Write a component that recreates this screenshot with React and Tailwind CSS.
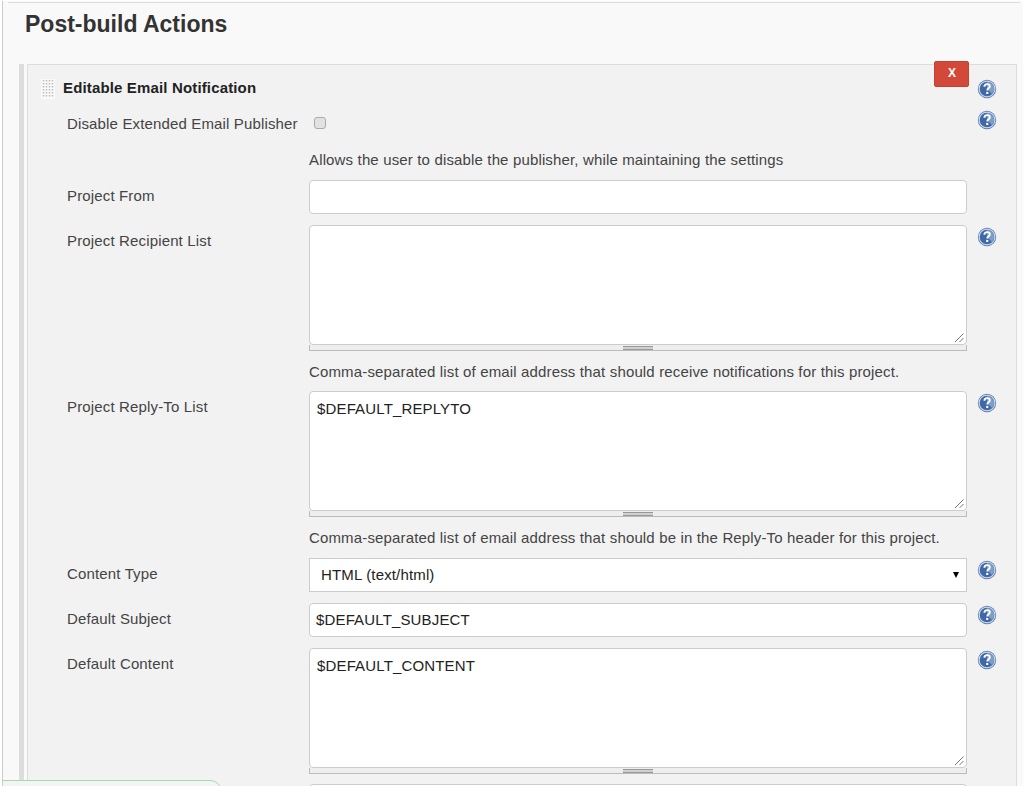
import React from "react";

function Help({ className = "" }) {
  return (
    <svg className={`shrink-0 ${className}`} width="20" height="20" viewBox="0 0 20 20">
      <circle cx="10" cy="10" r="9.2" fill="#6485b5" />
      <circle cx="10" cy="10" r="7.8" fill="none" stroke="#cbd8e8" strokeWidth="1.1" />
      <circle cx="10" cy="10" r="7.1" fill="#3f68a6" />
      <path d="M10 3a7 7 0 0 1 5 12L10 10z" fill="#7f9dc6" />
      <path d="M7.4 7.7c0-1.7 1.1-2.6 2.7-2.6s2.7.9 2.7 2.3c0 1.9-2.5 2-2.5 4" fill="none" stroke="#fff" strokeWidth="1.9" />
      <rect x="9.2" y="12.9" width="2.1" height="2.1" fill="#fff" />
    </svg>
  );
}

function Row({ label, help = true, height, children }) {
  return (
    <div className={`flex shrink-0 items-start ${height}`}>
      <div className="w-[243px] shrink-0 pt-[7px] pl-px leading-[18px]">{label}</div>
      <div className="w-[658px] shrink-0">{children}</div>
      {help && <Help className="ml-[10px] mt-[2px]" />}
    </div>
  );
}

function Area({ value, note }) {
  return (
    <>
      <div className="flex h-[120px] justify-between rounded-[4px] border border-[#ccc] bg-white pl-[7px] pt-[8px] leading-[18px] text-[#222]">
        <span>{value}</span>
        <svg className="mr-px mb-px self-end" width="11" height="11" viewBox="0 0 11 11" stroke="#777" strokeWidth="1">
          <path d="M1 10L9.5 1.5M5.5 10L9.5 6" />
        </svg>
      </div>
      <div className="flex h-[6px] justify-center border-x border-b border-[#bbb] bg-[#eee]">
        <div className="mt-px flex h-[4px] w-[30px] flex-col justify-between bg-[#d0d0cc]">
          <div className="h-px bg-[#999]" />
          <div className="h-px bg-[#999]" />
        </div>
      </div>
      {note && <p className="mt-[12px] whitespace-nowrap leading-[18px]">{note}</p>}
    </>
  );
}

export default function App() {
  return (
    <div className="h-[787px] w-[1023px] overflow-hidden bg-white font-['Liberation_Sans',Arial,sans-serif] text-[15px] tracking-[0.15px] text-[#444]">
      <div className="relative mt-px ml-[2px] h-[785px] overflow-hidden border-l border-[#ccc] bg-[#f9f9f9]">
        <div className="ml-[5px] mr-[3px] mt-px h-px bg-[#ddd]" />
        <h1 className="ml-[22px] mt-[7px] h-[54px] text-[23px] leading-[28px] font-bold tracking-normal text-[#333]">
          Post-build Actions
        </h1>
        <div className="ml-4 flex h-[760px]">
          <div className="mr-[3px] w-[5px] bg-[#ddd]" />
          <section className="flex w-[990px] flex-col border border-[#ddd] bg-[#f2f2f2]">
            <header className="flex h-[40px] shrink-0 items-start">
              <svg className="mt-[14px] ml-[13px]" width="14" height="20" viewBox="0 0 14 20">
                <rect width="14" height="20" fill="#fafafa" />
                <path d="M2.5 1v18M5.5 1v18M8.5 1v18M11.5 1v18" stroke="#bbb" strokeWidth="1.5" strokeDasharray="1.5 1.5" />
              </svg>
              <b className="ml-[8px] mt-[14px] w-[871px] leading-[18px] text-[#222]">Editable Email Notification</b>
              <div className="-mt-[4px] flex h-[26px] w-[35px] items-center justify-center rounded-[2px] border border-[#c9402f] bg-[#d24939] pb-[2px] pl-px text-[12px] font-bold text-white">X</div>
              <Help className="ml-[8px] mt-[14px]" />
            </header>
            <div className="flex flex-col pl-[38px]">
              <div className="flex h-[36px] shrink-0 items-start">
                <div className="w-[243px] shrink-0 pt-[10px] pl-px leading-[18px]">Disable Extended Email Publisher</div>
                <div className="w-[658px] shrink-0 pt-[12px] pl-[5px]">
                  <div className="h-[12px] w-[12px] rounded-[3px] border border-[#aaa] bg-[#e2e2e2]" />
                </div>
                <Help className="ml-[10px] mt-[5px]" />
              </div>
              <Row height="h-[39px]" help={false}>
                <p className="mt-[10px] whitespace-nowrap leading-[18px]">Allows the user to disable the publisher, while maintaining the settings</p>
              </Row>
              <Row label="Project From" height="h-[45px]" help={false}>
                <div className="h-[34px] rounded-[4px] border border-[#ccc] bg-white" />
              </Row>
              <Row label="Project Recipient List" height="h-[166px]">
                <Area note="Comma-separated list of email address that should receive notifications for this project." />
              </Row>
              <Row label="Project Reply-To List" height="h-[167px]">
                <Area value="$DEFAULT_REPLYTO" note="Comma-separated list of email address that should be in the Reply-To header for this project." />
              </Row>
              <Row label="Content Type" height="h-[45px]">
                <div className="flex h-[34px] items-center justify-between border border-[#ccc] bg-white pr-[7px] pl-[11px] text-[#222]">
                  <span>HTML (text/html)</span>
                  <svg width="6" height="6" viewBox="0 0 6 6"><path d="M0 0h6L3 6z" fill="#000" /></svg>
                </div>
              </Row>
              <Row label="Default Subject" height="h-[45px]">
                <div className="flex h-[34px] items-center rounded-[4px] border border-[#ccc] bg-white pl-[6px] text-[#222]">$DEFAULT_SUBJECT</div>
              </Row>
              <Row label="Default Content" height="h-[136px]">
                <Area value="$DEFAULT_CONTENT" />
              </Row>
              <Row height="h-[34px]" help={false}>
                <div className="h-[34px] rounded-[4px] border border-[#ccc] bg-white" />
              </Row>
            </div>
          </section>
        </div>
        <div className="absolute -left-px top-[779px] h-[20px] w-[220px] rounded-tr-[12px] border border-[#a8d5ba] bg-[#f3f6f0]" />
      </div>
    </div>
  );
}
